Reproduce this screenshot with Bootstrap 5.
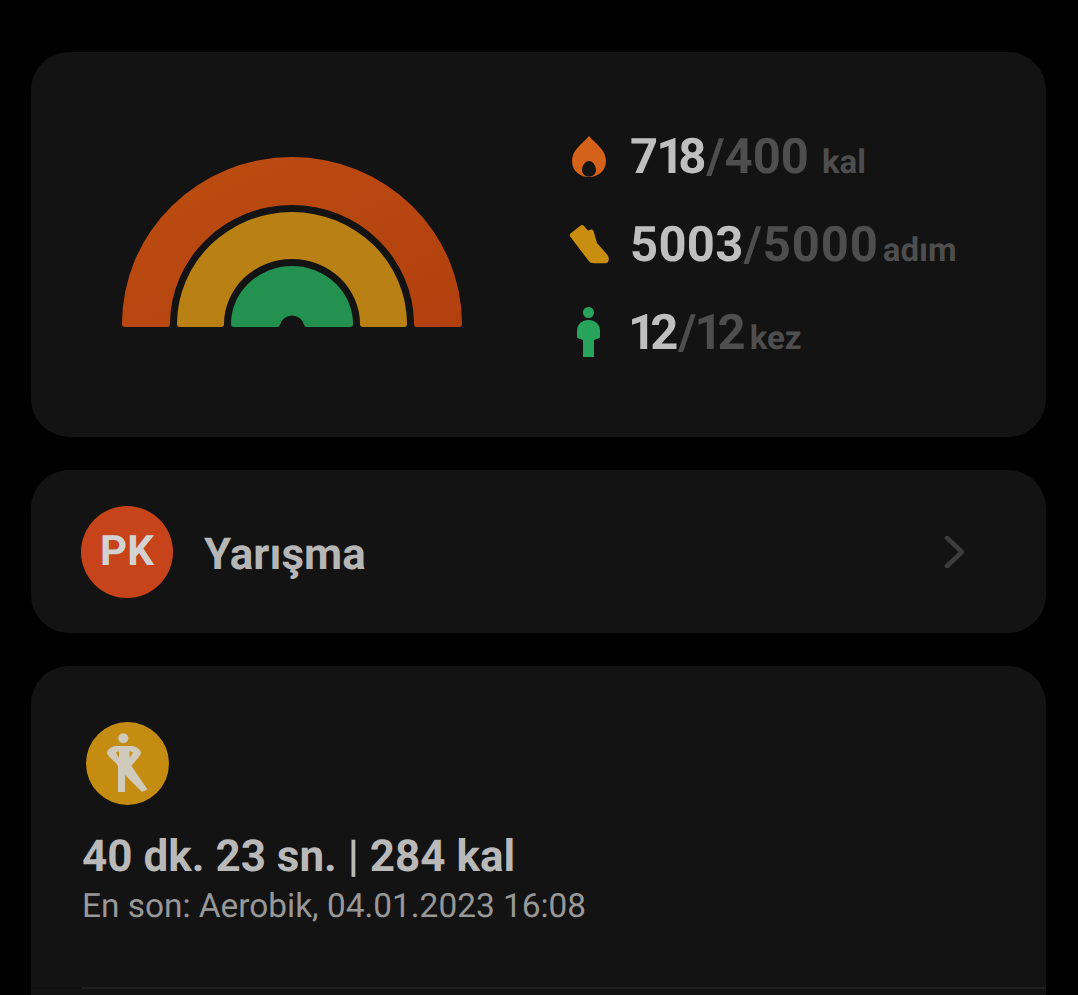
<!DOCTYPE html>
<html lang="tr">
<head>
<meta charset="utf-8">
<title>Aktivite</title>
<link href="https://cdn.jsdelivr.net/npm/bootstrap@5.3.0/dist/css/bootstrap.min.css" rel="stylesheet">
<style>
html,body{height:995px;overflow:hidden;background:#000;}
body{font-family:Roboto,"Liberation Sans",sans-serif;color:#bfbfbf;text-rendering:geometricPrecision;}
.screen-wrap{padding:52px 32px 0 31px;gap:33px;height:995px;overflow:hidden;}
.panel-box{background:#131313;border-radius:38px;flex:none;}
.panel-rings{height:385px;padding-left:91px;}
.rings-svg{width:340px;height:171px;display:block;margin-top:-5px;}
.stat-col{margin-left:107px;}
.stat-line{height:88px;}
.stat-ico{width:40px;margin-right:21px;}
.stat-num{font-size:49px;font-weight:700;line-height:1;}
.digit-pre{letter-spacing:-2px;}
.digit-one{letter-spacing:-6px;}
.num-lead{margin-left:-2px;}
.num-open{letter-spacing:.3px;}
.num-open .stat-dim{letter-spacing:.9px;}
.stat-dim{color:#4e4e4e;}
.stat-dim .digit-one{letter-spacing:-5px;}
.stat-unit{font-size:33px;font-weight:700;color:#4e4e4e;line-height:1;}
.unit-wide{margin-left:13px;}
.unit-tight{margin-left:4px;}
.panel-race{height:163px;padding:0 80px 0 50px;}
.pk-disc{width:92px;height:92px;background:#c7431a;font-size:42px;font-weight:700;color:#d2d2d2;}
.race-label{font-size:44px;font-weight:700;color:#b6b6b6;margin-left:31px;padding-top:5px;line-height:1.2;}
.panel-last{height:420px;padding:56px 0 0 51px;}
.walk-disc{width:84px;height:84px;display:block;margin-left:4px;}
.last-title{font-size:44px;font-weight:700;color:#b9b9b9;line-height:48px;margin-top:26px;}
.last-sub{font-size:33.400px;color:#989898;line-height:38px;margin-top:8px;}
.rule-band{height:2px;margin:61px 0 0 -51px;}
.rule-start{width:51px;background:#0e0e0e;}
.rule-rest{background:#1f1f1f;}
</style>
</head>
<body>
<div class="screen-wrap d-flex flex-column">
  <section class="panel-box panel-rings d-flex align-items-center">
    <svg class="rings-svg" viewBox="122 157 340 171" role="img" aria-label="Halkalar">
      <defs><linearGradient id="ringOrange" x1="0" y1="0" x2="1" y2="1"><stop offset="0" stop-color="#bd4d11"/><stop offset="1" stop-color="#b2400f"/></linearGradient></defs>
      <path fill="url(#ringOrange)" d="M125 327a3 3 0 0 1-3-3A170 167 0 0 1 462 324a3 3 0 0 1-3 3H417a3 3 0 0 1-3-3A122 119 0 0 0 170 324a3 3 0 0 1-3 3Z"/>
      <path fill="#b98113" d="M180 327a3 3 0 0 1-3-3A115 112 0 0 1 407 324a3 3 0 0 1-3 3H363a3 3 0 0 1-3-3A68 65 0 0 0 224 324a3 3 0 0 1-3 3Z"/>
      <path fill="#239150" d="M234 327a3 3 0 0 1-3-3A61 58 0 0 1 353 324a3 3 0 0 1-3 3H307a3 3 0 0 1-3-2.500A12.500 12.500 0 0 0 280 324.500a3 3 0 0 1-3 2.500Z"/>
    </svg>
    <div class="stat-col">
      <div class="stat-line d-flex align-items-center">
        <div class="stat-ico d-flex justify-content-center">
          <svg width="34" height="41" viewBox="572 136 34 41"><path fill="#d4621a" fill-rule="evenodd" d="M589 136C582 144 572 150 572 161C572 171 580 177 589 177C598 177 606 171 606 161C606 150 596 144 589 136ZM589 161C585 161 582 166 582 170C582 174 585 176.500 589 176.500C593 176.500 596 174 596 170C596 166 593 161 589 161Z"/></svg>
        </div>
        <div class="d-flex align-items-baseline"><span class="stat-num"><span class="digit-pre">7</span><span class="digit-one">1</span>8<span class="stat-dim">/400</span></span><span class="stat-unit unit-wide">kal</span></div>
      </div>
      <div class="stat-line d-flex align-items-center">
        <div class="stat-ico d-flex justify-content-center">
          <svg width="40" height="39" viewBox="569 227 40 39"><path fill="#c98e0f" d="M570.500 235.500L580 228C581.500 226.700 583 226.700 584 228L588 232.500L591 231.500C592 231.200 593 232 593.500 233L597 245L607.500 257C609 259 609.500 262.500 607.500 264.500C607 265 606 265.300 605 265.300H594C591 265.300 589.500 264 588 262L570.500 239C569.500 237.800 569.500 236.500 570.500 235.500Z"/></svg>
        </div>
        <div class="d-flex align-items-baseline"><span class="stat-num num-open">5003<span class="stat-dim">/5000</span></span><span class="stat-unit unit-tight">adım</span></div>
      </div>
      <div class="stat-line d-flex align-items-center">
        <div class="stat-ico d-flex justify-content-center">
          <svg width="26" height="52" viewBox="0 0 26 52"><circle cx="12.500" cy="5.500" r="5.500" fill="#27a35c"/><path fill="#27a35c" d="M12.500 13C5 13 1 18 1 24V30C1 31.500 5 32 7 33V50H18V33C20 32 24 31.500 24 30V24C24 18 20 13 12.500 13Z"/></svg>
        </div>
        <div class="d-flex align-items-baseline"><span class="stat-num num-lead"><span class="digit-one">1</span>2<span class="stat-dim"><span class="digit-pre">/</span><span class="digit-one">1</span>2</span></span><span class="stat-unit unit-tight">kez</span></div>
      </div>
    </div>
  </section>

  <section class="panel-box panel-race d-flex align-items-center">
    <div class="pk-disc rounded-circle d-flex align-items-center justify-content-center">PK</div>
    <div class="race-label flex-grow-1">Yarışma</div>
    <svg width="22" height="32" viewBox="0 0 22 32"><path d="M3 2L18 16L3 30" fill="none" stroke="#3d3d3d" stroke-width="4.500" stroke-linecap="round" stroke-linejoin="round"/></svg>
  </section>

  <section class="panel-box panel-last">
    <svg class="walk-disc" viewBox="86 722 84 84">
      <circle cx="127.500" cy="763.500" r="41.500" fill="#c48c10"/>
      <circle cx="123.300" cy="738.300" r="5" fill="#cfcabb"/>
      <path fill="#cfcabb" fill-rule="evenodd" d="M115 746H133C137 747 141 750 141 753C140 757 134 762 131.500 766L147.500 789.500L142 792L125 775V792H118V766C115 761 108 757 107 753C107 750 111 747 115 746ZM116 752.500L119 758V751ZM129.500 751V758L133 752.500Z"/>
    </svg>
    <div class="last-title">40 dk. 23 sn. | 284 kal</div>
    <div class="last-sub">En son: Aerobik, 04.01.2023 16:08</div>
    <div class="rule-band d-flex"><div class="rule-start"></div><div class="rule-rest flex-grow-1"></div></div>
  </section>
</div>
<script src="https://cdn.jsdelivr.net/npm/bootstrap@5.3.0/dist/js/bootstrap.bundle.min.js"></script>
</body>
</html>
